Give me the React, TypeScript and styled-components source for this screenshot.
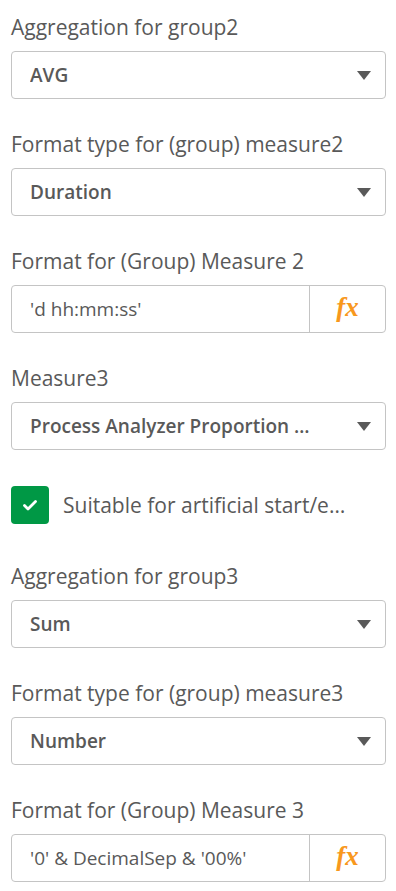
import React from 'react';
import styled, { createGlobalStyle } from 'styled-components';

const GlobalStyle = createGlobalStyle`
    html, body {
        margin    : 0;
        padding   : 0;
        background: #ffffff;
    }
    body {
        font-family: "Open Sans", "Noto Sans", sans-serif;
    }
`

const Panel = styled.div`
    width         : 375px;
    padding       : 15px 10px 0 11px;
    display       : flex;
    flex-direction: column;
`

const Field = styled.div<{ $gapAfter?: number }>`
    display       : flex;
    flex-direction: column;
    margin-bottom : ${p => p.$gapAfter ?? 33}px;
`

const Label = styled.div`
    font-size    : 21px;
    line-height  : 24px;
    height       : 24px;
    color        : #595959;
    margin-bottom: 12px;
    white-space  : nowrap;
`

const SelectBox = styled.div`
    height       : 46px;
    border       : 1px solid #c4c4c4;
    border-radius: 4px;
    display      : flex;
    align-items  : center;
    padding      : 0 14px 0 18px;
    gap          : 37px;
`

const SelectValue = styled.span`
    flex         : 1;
    min-width    : 0;
    font-size    : 19px;
    font-weight  : 600;
    color        : #595959;
    white-space  : nowrap;
    overflow     : hidden;
    text-overflow: ellipsis;
`

const Caret = styled.span`
    width       : 0;
    height      : 0;
    border-left : 7px solid transparent;
    border-right: 7px solid transparent;
    border-top  : 9px solid #595959;
    flex-shrink : 0;
`

const InputGroup = styled.div`
    height       : 46px;
    border       : 1px solid #c4c4c4;
    border-radius: 4px;
    display      : flex;
    align-items  : stretch;
`

const TextValue = styled.div`
    flex       : 1;
    display    : flex;
    align-items: center;
    padding    : 0 0 0 18px;
    font-size  : 19px;
    color      : #595959;
    white-space: nowrap;
    overflow   : hidden;
`

const FxButton = styled.div`
    width          : 75px;
    border-left    : 1px solid #c4c4c4;
    display        : flex;
    align-items    : center;
    justify-content: center;
    font-family    : "Liberation Serif", "DejaVu Serif", serif;
    font-style     : italic;
    font-weight    : 700;
    font-size      : 27px;
    color          : #f8981d;
    padding-bottom : 3px;
`

const CheckRow = styled.div`
    display      : flex;
    align-items  : center;
    gap          : 14px;
    margin-bottom: 40px;
`

const CheckBox = styled.div`
    width          : 38px;
    height         : 38px;
    border-radius  : 4px;
    background     : #009845;
    display        : flex;
    align-items    : center;
    justify-content: center;
    flex-shrink    : 0;
`

const CheckText = styled.span`
    max-width    : 289px;
    font-size    : 21px;
    color        : #595959;
    white-space  : nowrap;
    overflow     : hidden;
    text-overflow: ellipsis;
`

const Select = ({ label, value, gapAfter }: { label: string, value: string, gapAfter?: number }) => (
    <Field $gapAfter={gapAfter}>
        <Label>{label}</Label>
        <SelectBox>
            <SelectValue>{value}</SelectValue>
            <Caret />
        </SelectBox>
    </Field>
)

const Expression = ({ label, value }: { label: string, value: string }) => (
    <Field>
        <Label>{label}</Label>
        <InputGroup>
            <TextValue>{value}</TextValue>
            <FxButton>fx</FxButton>
        </InputGroup>
    </Field>
)

const App = () => {
    return (
        <>
            <GlobalStyle />
            <Panel>
                <Select label="Aggregation for group2" value="AVG" />
                <Select label="Format type for (group) measure2" value="Duration" />
                <Expression label="Format for (Group) Measure 2" value="'d hh:mm:ss'" />
                <Select label="Measure3" value="Process Analyzer Proportion of Cases" gapAfter={36} />

                <CheckRow>
                    <CheckBox>
                        <svg width="14" height="11" viewBox="0 0 14 11">
                            <path d="M1.5 5.5 L5 9 L12.5 1.5" fill="none" stroke="#fff" strokeWidth="2.8" strokeLinecap="round" strokeLinejoin="round" />
                        </svg>
                    </CheckBox>
                    <CheckText>Suitable for artificial start/end points</CheckText>
                </CheckRow>

                <Select label="Aggregation for group3" value="Sum" />
                <Select label="Format type for (group) measure3" value="Number" />
                <Expression label="Format for (Group) Measure 3" value="'0' & DecimalSep & '00%'" />
            </Panel>
        </>
    )
}

export default App;
